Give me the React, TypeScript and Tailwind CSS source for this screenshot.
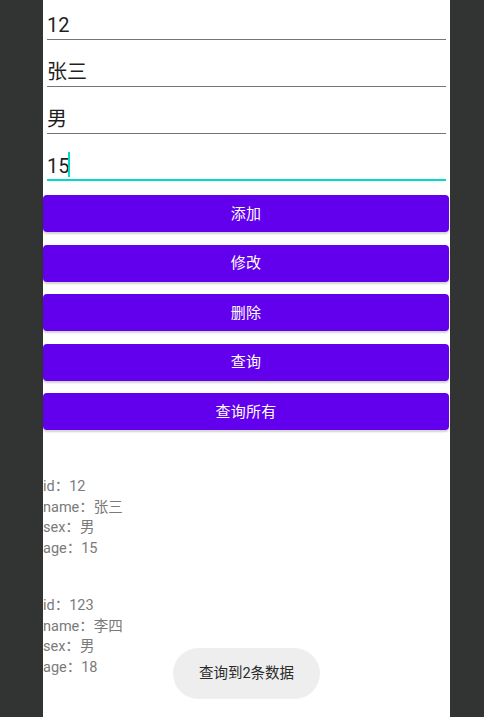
import React from "react";

const font = { fontFamily: '"Roboto", "Noto Sans CJK SC", sans-serif' };

function Field({ value, h, active }: { value: string; h: number; active?: boolean }) {
  return (
    <div
      className={
        "mx-[4px] flex items-end " +
        (active ? "border-b-2 border-[#03DAC5] pb-[1px]" : "border-b border-[#767676] pb-[2px]")
      }
      style={{ height: h }}
    >
      <span className="text-[20px] leading-[24px] text-[#1f1f1f]">{value}</span>
      {active && <span className="ml-[-1px] mb-[1px] inline-block h-[25px] w-[2px] bg-[#03DAC5]" />}
    </div>
  );
}

function Btn({ label }: { label: string }) {
  return (
    <div className="flex h-[37px] w-[406px] items-center justify-center rounded-[4px] bg-[#6200EE] pt-[1px] text-[15px] tracking-[0.3px] text-white shadow-[0_2px_2px_rgba(0,0,0,0.18)]">
      {label}
    </div>
  );
}

function Record({ id, name, sex, age }: { id: string; name: string; sex: string; age: string }) {
  return (
    <div className="flex flex-col text-[14.5px] leading-[20.7px] text-[#7a7a7a]">
      <div>id：{id}</div>
      <div>name：{name}</div>
      <div>sex：{sex}</div>
      <div>age：{age}</div>
    </div>
  );
}

export default function App() {
  return (
    <div className="relative flex h-[717px] w-[484px] overflow-hidden bg-[#313432]" style={font}>
      <div className="ml-[43px] flex h-full w-[407px] flex-col bg-white">
        <Field value="12" h={40} />
        <Field value="张三" h={47} />
        <Field value="男" h={47} />
        <Field value="15" h={47} active />
        <div className="mt-[14px] flex flex-col gap-[12.5px]">
          <Btn label="添加" />
          <Btn label="修改" />
          <Btn label="删除" />
          <Btn label="查询" />
          <Btn label="查询所有" />
        </div>
        <div className="mt-[47px] flex flex-col gap-[36px]">
          <Record id="12" name="张三" sex="男" age="15" />
          <Record id="123" name="李四" sex="男" age="18" />
        </div>
      </div>
      <div className="absolute left-[173px] top-[648px] flex h-[51px] w-[147px] items-center justify-center rounded-full bg-[#eeeeee] text-[14.5px] text-[#2b2b2b]">
        查询到2条数据
      </div>
    </div>
  );
}
